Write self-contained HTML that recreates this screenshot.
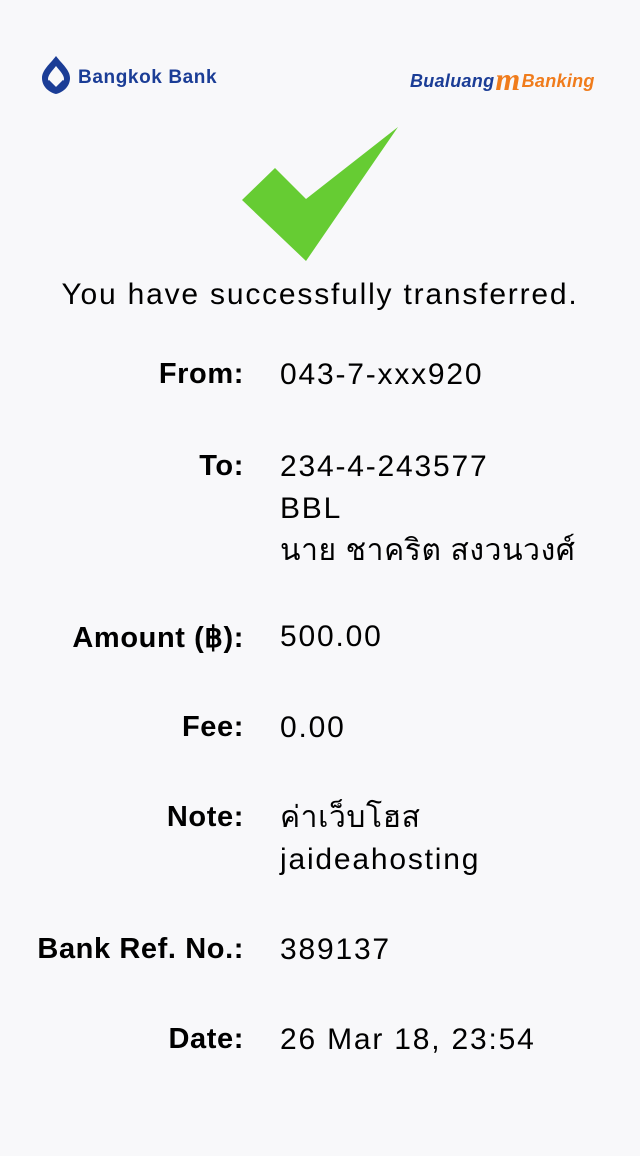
<!DOCTYPE html>
<html><head><meta charset="utf-8"><style>
body{margin:0;width:640px;height:1156px;background:#f8f8fa;font-family:"Liberation Sans","Noto Sans CJK SC",sans-serif;color:#000;position:relative;overflow:hidden}
.a{position:absolute}
.l{position:absolute;right:396px;font-weight:bold;font-size:29px;letter-spacing:0.6px;text-align:right;white-space:nowrap}
.v{position:absolute;left:280px;font-size:30px;letter-spacing:1.8px;line-height:42px;white-space:nowrap}
</style></head><body>
<svg class="a" style="left:38px;top:54px" width="36" height="42" viewBox="0 0 36 42"><path d="M18 2 C12 10 4 16 4 24 C4 32 10 38 18 40 C26 38 32 32 32 24 C32 16 24 10 18 2Z M18 12 C22 17 26 21 26 25 C26 28 22 32 18 36 C14 32 10 28 10 25 C10 21 14 17 18 12Z" fill="#1b3d96" fill-rule="evenodd"/><path d="M10 27 L18 35 L26 27" stroke="#1b3d96" stroke-width="3" fill="none"/></svg>
<div class="a" style="left:78px;top:67px;font-size:19px;font-weight:bold;color:#1b3d96;letter-spacing:0.6px">Bangkok Bank</div>
<div class="a" style="left:410px;top:58px;font-size:18px;font-weight:bold;font-style:italic;color:#1b3d96;white-space:nowrap;letter-spacing:0.3px">Bualuang<span style="color:#f07c1c;font-size:32px;font-family:'Liberation Serif',serif;margin:0 1px;position:relative;top:3px">m</span><span style="color:#f07c1c">Banking</span></div>
<svg class="a" style="left:0;top:0" width="640" height="300"><polygon points="242,200 275,168 306,199 398,127 306,261" fill="#66cc33"/></svg>
<div class="a" style="left:0;width:640px;top:278px;text-align:center;font-size:30px;letter-spacing:1.8px">You have successfully transferred.</div>
<div class="l" style="top:358px">From:</div><div class="v" style="top:354px">043-7-xxx920</div>
<div class="l" style="top:450px">To:</div><div class="v" style="top:446px">234-4-243577<br>BBL<br><span style="letter-spacing:0.6px">นาย ชาคริต สงวนวงศ์</span></div>
<div class="l" style="top:620px">Amount (฿):</div><div class="v" style="top:616px">500.00</div>
<div class="l" style="top:711px">Fee:</div><div class="v" style="top:707px">0.00</div>
<div class="l" style="top:801px">Note:</div><div class="v" style="top:797px"><span style="letter-spacing:0.6px">ค่าเว็บโฮส</span><br>jaideahosting</div>
<div class="l" style="top:933px">Bank Ref. No.:</div><div class="v" style="top:929px">389137</div>
<div class="l" style="top:1023px">Date:</div><div class="v" style="top:1019px">26 Mar 18, 23:54</div>
</body></html>
